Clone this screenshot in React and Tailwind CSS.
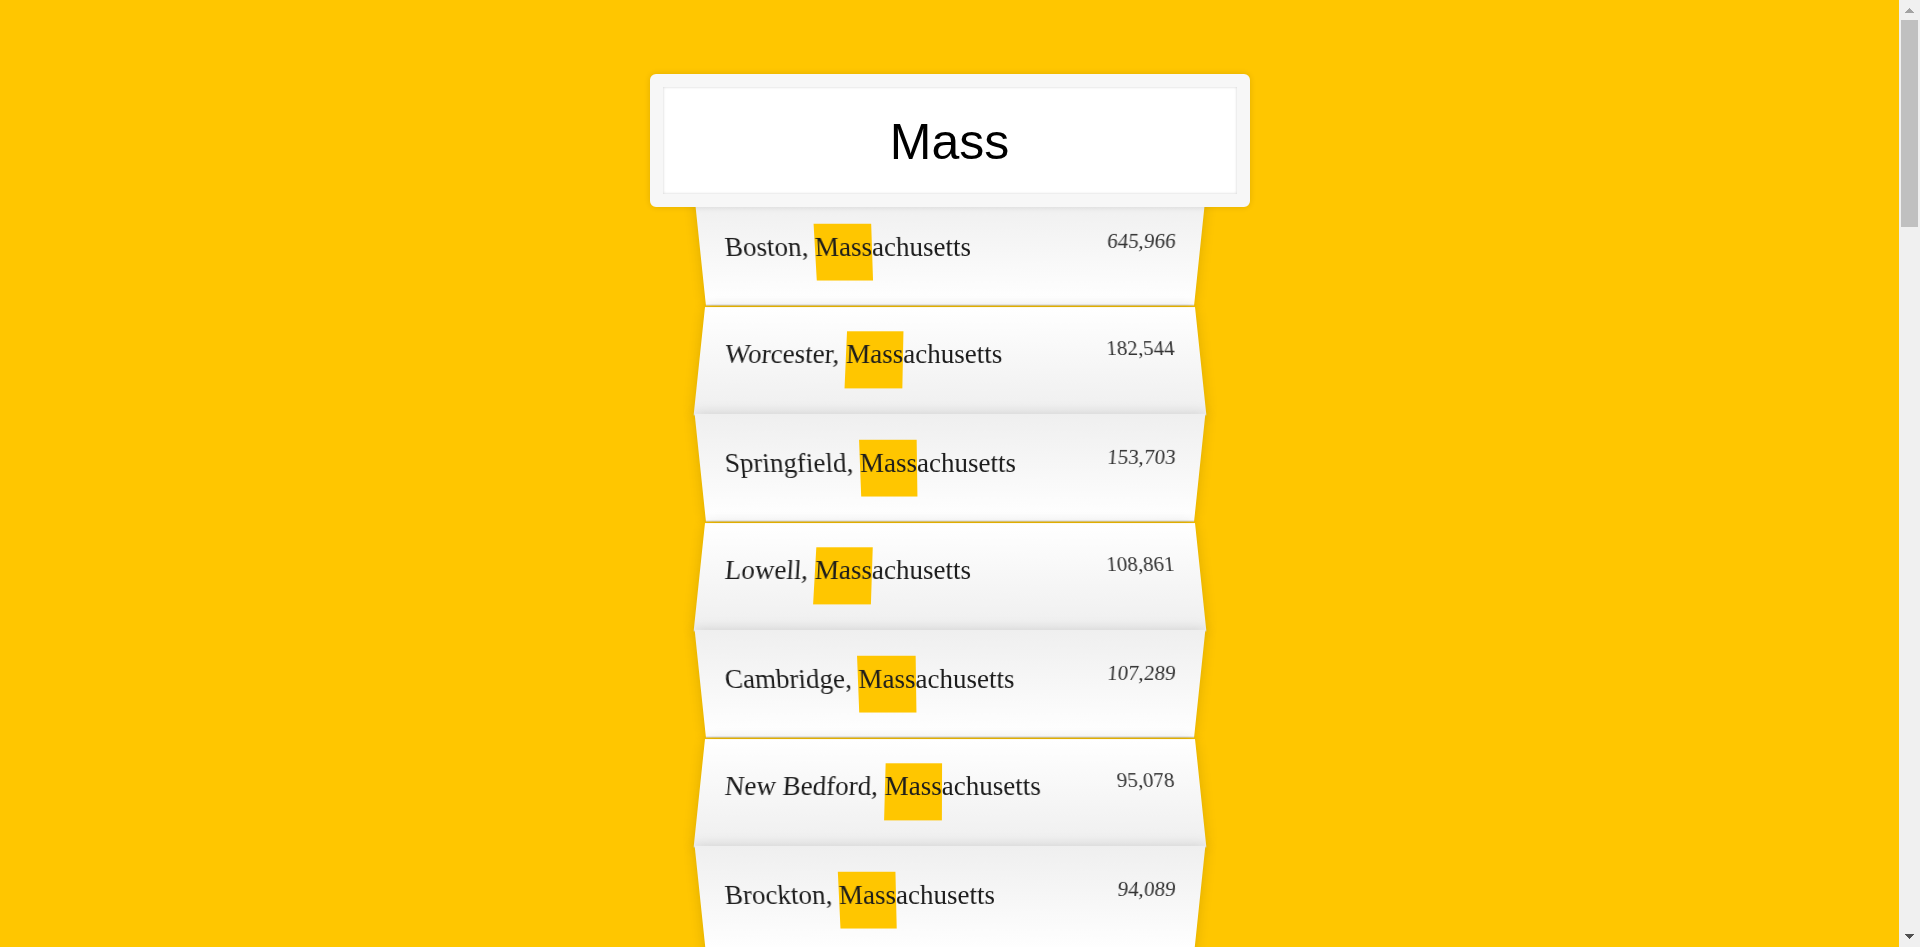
import { useState } from 'react';

const cities = [
  { city: 'Boston', state: 'Massachusetts', population: 645966 },
  { city: 'Worcester', state: 'Massachusetts', population: 182544 },
  { city: 'Springfield', state: 'Massachusetts', population: 153703 },
  { city: 'Lowell', state: 'Massachusetts', population: 108861 },
  { city: 'Cambridge', state: 'Massachusetts', population: 107289 },
  { city: 'New Bedford', state: 'Massachusetts', population: 95078 },
  { city: 'Brockton', state: 'Massachusetts', population: 94089 },
];

function Highlighted({ text, query }) {
  const at = query ? text.toLowerCase().indexOf(query.toLowerCase()) : -1;
  if (at < 0) return text;
  const end = at + query.length;
  return (
    <>
      {text.slice(0, at)}
      <mark className="bg-[#ffc600] pt-2 pb-[19px] text-inherit">{text.slice(at, end)}</mark>
      {text.slice(end)}
    </>
  );
}

function Suggestion({ place, query }) {
  return (
    <li className="flex justify-between border-b border-[#d8d8d8] px-[25px] pt-[25px] pb-9 shadow-[0_0_12px_rgba(0,0,0,0.14)] odd:bg-linear-to-t even:bg-linear-to-b from-white to-[#efefef] odd:[transform:perspective(125px)_rotateX(-3deg)_translateY(4px)] even:[transform:perspective(125px)_rotateX(3deg)_translateY(3px)_scale(1.001)]">
      <span className="text-[27px] leading-[46px] text-[#1c1c1c]">
        <Highlighted text={`${place.city}, ${place.state}`} query={query} />
      </span>
      <span className="text-[21px] leading-[35px] text-[#333]">
        {place.population.toLocaleString('en-US')}
      </span>
    </li>
  );
}

function ScrollRail() {
  return (
    <div className="flex w-[21px] shrink-0 flex-col bg-[#f0f0f0]">
      <button type="button" aria-label="Scroll up" className="flex h-5 justify-center pt-2">
        <svg width="9" height="5" viewBox="0 0 9 5" fill="#a3a3a3" shapeRendering="crispEdges">
          <path d="M4 0h1v1h1v1h1v1h1v1h1v1H0V4h1V3h1V2h1V1h1z" />
        </svg>
      </button>
      <div className="flex-1 px-0.5">
        <div className="h-[22.8%] bg-[#c0c0c0]" />
      </div>
      <button type="button" aria-label="Scroll down" className="flex h-5 justify-center pt-[7px]">
        <svg width="9" height="5" viewBox="0 0 9 5" fill="#505050" shapeRendering="crispEdges">
          <path d="M0 0h9v1H8v1H7v1H6v1H5v1H4V4H3V3H2V2H1V1H0z" />
        </svg>
      </button>
    </div>
  );
}

export default function App() {
  const [query, setQuery] = useState('Mass');
  const matches = cities.filter((p) =>
    `${p.city}, ${p.state}`.toLowerCase().includes(query.toLowerCase())
  );

  return (
    <div className="flex h-screen bg-[#ffc600]">
      <main className="flex-1 overflow-x-hidden overflow-y-auto [scrollbar-width:none]">
        <form
          className="mx-auto flex w-full max-w-[600px] flex-col items-center pt-[74px] font-['Liberation_Serif',serif]"
          onSubmit={(e) => e.preventDefault()}
        >
          <input
            type="text"
            aria-label="City or state"
            placeholder="City or State"
            value={query}
            onChange={(e) => setQuery(e.target.value)}
            className="z-10 h-[133px] w-full rounded-md border-[13px] border-[#f7f7f7] bg-white px-6 pt-[25px] pb-[23px] text-center font-['Liberation_Sans',sans-serif] text-[50px] text-black shadow-[0_0_6px_rgba(0,0,0,0.12),inset_0_0_3px_rgba(0,0,0,0.19)] outline-none"
          />
          <ul className="-mt-3 w-5/6">
            {matches.map((place) => (
              <Suggestion key={place.city} place={place} query={query} />
            ))}
          </ul>
        </form>
      </main>
      <ScrollRail />
    </div>
  );
}
